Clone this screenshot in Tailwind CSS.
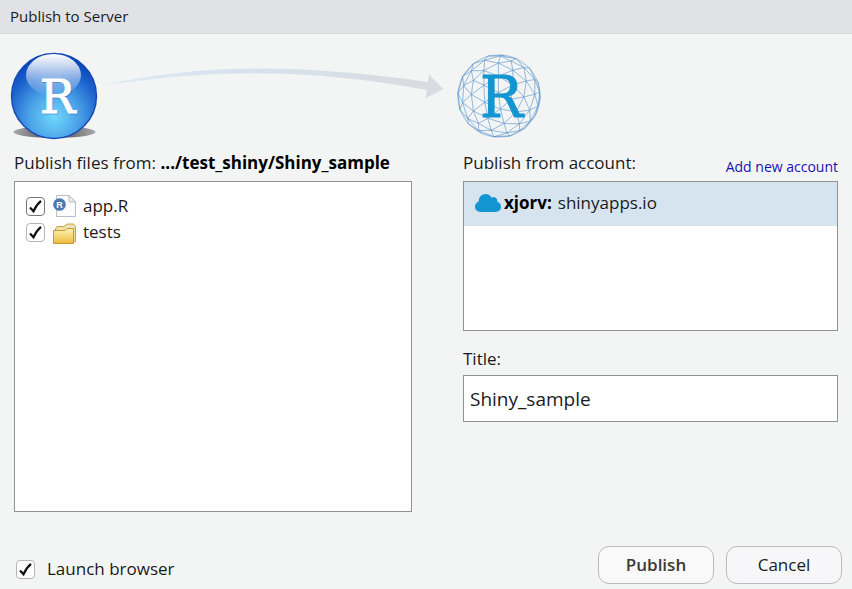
<!DOCTYPE html>
<html lang="en">
<head>
<meta charset="utf-8">
<meta name="viewport" content="width=device-width, initial-scale=1">
<title>Publish to Server</title>
<script src="https://cdn.jsdelivr.net/npm/@tailwindcss/browser@4"></script>
</head>
<body class="flex min-h-screen flex-col bg-[#f3f5f4] font-['Open_Sans','Noto_Sans',sans-serif] text-[17px] leading-6 text-[#1a1a1a]">
<header class="border-b border-[#d8d9dd] bg-[#e1e2e6] px-[10px] pt-1 pb-[5px]">
  <h1 class="text-[15px] leading-6">Publish to Server</h1>
</header>

<main class="flex flex-1 flex-col px-[14px] pt-4">
  <div class="grid grid-cols-[398fr_375fr] gap-x-[51px]" aria-hidden="true">
    <div class="-mr-8 -ml-1 flex">
      <svg class="h-[92px] w-[88px] shrink-0" viewBox="10 50 88 92">
        <defs>
          <radialGradient id="ball" gradientUnits="userSpaceOnUse" cx="54" cy="117" r="62">
            <stop offset="0" stop-color="#70d8fa"/><stop offset=".4" stop-color="#4ba2e8"/><stop offset=".75" stop-color="#1c62cd"/><stop offset="1" stop-color="#0640b8"/>
          </radialGradient>
          <linearGradient id="gloss" x1="0" y1="0" x2="0" y2="1">
            <stop offset="0" stop-color="#fff"/><stop offset=".3" stop-color="#fff" stop-opacity=".75"/><stop offset="1" stop-color="#fff" stop-opacity="0"/>
          </linearGradient>
          <linearGradient id="floor"><stop offset="0" stop-color="#a8a9aa"/><stop offset=".3" stop-color="#6e6e70"/><stop offset=".7" stop-color="#6e6e70"/><stop offset="1" stop-color="#a8a9aa"/></linearGradient>
        </defs>
        <ellipse cx="54.500" cy="132" rx="41" ry="6" fill="url(#floor)"/>
        <circle cx="54" cy="96" r="42.500" fill="url(#ball)" stroke="#1548b4" stroke-width="1.400"/>
        <ellipse cx="53.500" cy="75" rx="27.500" ry="21" fill="url(#gloss)"/>
        <text x="41" y="113.500" font-family="DejaVu Serif, serif" font-size="47" fill="#17479c" stroke="#17479c" opacity=".3">R</text>
        <text x="40" y="112.500" font-family="DejaVu Serif, serif" font-size="47" fill="#fff" stroke="#fff">R</text>
      </svg>
      <svg class="h-[92px] min-w-0 flex-1" viewBox="98 50 346 92" preserveAspectRatio="none">
        <defs><linearGradient id="sweep"><stop offset="0" stop-color="#e1ebf2"/><stop offset=".35" stop-color="#d7e3ef"/><stop offset="1" stop-color="#d9dbdf"/></linearGradient></defs>
        <path d="M100 86C200 63 300 64 428 82L429 74.500 443.500 89 425 98.500 427 90C310 69 220 68 100 86Z" fill="url(#sweep)"/>
      </svg>
    </div>
    <div>
      <svg class="-ml-[7px] h-[92px] w-[86px]" viewBox="456 50 86 92">
        <circle cx="499" cy="96" r="41.300" fill="none" stroke="#5b93cb" stroke-opacity=".5" stroke-width=".7"/>
        <path id="globe" fill="none" stroke="#5b93cb" stroke-opacity=".6" stroke-width=".6" stroke-linejoin="round"/>
        <text x="480" y="117" font-family="DejaVu Serif, serif" font-size="57" fill="#1295d0" stroke="#1295d0">R</text>
      </svg>
    </div>
  </div>

  <div class="grid flex-1 grid-cols-[398fr_375fr] gap-x-[51px]">
    <section class="flex flex-col">
      <h2 class="mt-[9px] mb-[6px]">Publish files from: <strong class="text-black">.../test_shiny/Shiny_sample</strong></h2>
      <ul class="min-h-[331px] flex-1 border border-[#919393] bg-white px-[11px] pt-[11px]">
        <li>
          <label class="flex h-[26px] items-center">
            <span class="relative flex size-[19px]">
              <input type="checkbox" checked class="peer size-[19px] appearance-none rounded-[4px] border border-[#777] bg-white">
              <svg class="pointer-events-none absolute inset-0 hidden size-[19px] peer-checked:block" viewBox="0 0 19 19" fill="none" stroke="#111" stroke-width="2.200"><path d="M4 10.500 7.500 14.200Q10.500 7.500 15 3.800"/></svg>
            </span>
            <svg class="ml-2 h-6 w-6" viewBox="0 0 24 24">
              <path d="M3.500 1.500H16L22.500 8V22.500H3.500Z" fill="#fbfcfd" stroke="#b9bec6"/>
              <path d="M16 1.500V8H22.500Z" fill="#eceef1" stroke="#b9bec6" stroke-linejoin="round"/>
              <circle cx="6.500" cy="10.500" r="6.300" fill="#4c78b2"/>
              <text x="6.500" y="13.800" text-anchor="middle" font-family="Liberation Sans, sans-serif" font-weight="700" font-size="9" fill="#fff">R</text>
            </svg>
            <span class="ml-[6px]">app.R</span>
          </label>
        </li>
        <li>
          <label class="flex h-[26px] items-center">
            <span class="relative flex size-[19px]">
              <input type="checkbox" checked class="peer size-[19px] appearance-none rounded-[4px] border border-[#b5b5b5] bg-white">
              <svg class="pointer-events-none absolute inset-0 hidden size-[19px] peer-checked:block" viewBox="0 0 19 19" fill="none" stroke="#111" stroke-width="2.200"><path d="M4 10.500 7.500 14.200Q10.500 7.500 15 3.800"/></svg>
            </span>
            <svg class="ml-2 h-6 w-6" viewBox="0 0 24 24">
              <defs><linearGradient id="folder" x1="0" y1="0" x2="0" y2="1"><stop offset="0" stop-color="#fbf2b4"/><stop offset="1" stop-color="#eebb3c"/></linearGradient></defs>
              <path d="M2.500 9 4 6.500H11L14 4H20.500L22.500 6.500V21.500H3Z" fill="#f2e3a4" stroke="#c8a24a"/>
              <path d="M14 6.500H21.500V9H13Z" fill="#e6e3dc"/>
              <path d="M.5 10.500H12L14 8.500H20.500V23.500H.5Z" fill="url(#folder)" stroke="#c99a28" stroke-linejoin="round"/>
            </svg>
            <span class="ml-[6px]">tests</span>
          </label>
        </li>
      </ul>
    </section>

    <section>
      <div class="flex h-[39px] items-start justify-between pt-[9px]">
        <h2>Publish from account:</h2>
        <a href="#" class="mt-1 text-[14px] text-[#1a12b0]">Add new account</a>
      </div>
      <ul class="h-[150px] border border-[#919393] bg-white">
        <li class="flex h-[44px] items-center bg-[#d6e4f0] px-[11px] pb-[2px]">
          <svg class="h-5 w-[26px]" viewBox="0 0 26 20"><path d="M5.500 19C2.300 19 0 16.800 0 13.800 0 11.200 1.600 9.200 3.700 8.400 3.700 4 6.800 1 10.600 1 13.400 1 15.600 2.400 16.800 4.700 19.800 3.300 22.800 5.300 22.300 8.800 24.700 9.500 26 11.500 26 13.800 26 16.800 23.800 19 20.700 19Z" fill="#1295d0"/></svg>
          <strong class="ml-[3px] text-black">xjorv:</strong><span class="ml-[6px]">shinyapps.io</span>
        </li>
      </ul>
      <label for="title" class="mt-4 mb-1 block">Title:</label>
      <input id="title" type="text" value="Shiny_sample" class="block h-[47px] w-full border border-[#919393] bg-white px-[6px] text-[19px] outline-none">
    </section>
  </div>
</main>

<footer class="flex items-end justify-between pt-[34px] pr-[10px] pb-[5px] pl-4">
  <label class="flex items-center gap-3 pb-[3px]">
    <span class="relative flex size-[19px]">
      <input type="checkbox" checked class="peer size-[19px] appearance-none rounded-[4px] border border-[#b5b5b5] bg-white">
      <svg class="pointer-events-none absolute inset-0 hidden size-[19px] peer-checked:block" viewBox="0 0 19 19" fill="none" stroke="#111" stroke-width="2.200"><path d="M4 10.500 7.500 14.200Q10.500 7.500 15 3.800"/></svg>
    </span>
    <span>Launch browser</span>
  </label>
  <div class="flex gap-3">
    <button type="button" class="h-[38px] w-[116px] rounded-[11px] border border-[#bbb] bg-[#f9f9f9] font-semibold text-[#3a3a3a]">Publish</button>
    <button type="button" class="h-[38px] w-[116px] rounded-[11px] border border-[#bbb] bg-[#f7f7f9]">Cancel</button>
  </div>
</footer>

<script>
  // Wireframe globe: subdivided icosahedron, near side only.
  const g = (1 + Math.sqrt(5)) / 2, N = 3, R = 41.5, CX = 499, CY = 96;
  const V = [[-1,g,0],[1,g,0],[-1,-g,0],[1,-g,0],[0,-1,g],[0,1,g],[0,-1,-g],[0,1,-g],[g,0,-1],[g,0,1],[-g,0,-1],[-g,0,1]];
  const F = [[0,11,5],[0,5,1],[0,1,7],[0,7,10],[0,10,11],[1,5,9],[5,11,4],[11,10,2],[10,7,6],[7,1,8],[3,9,4],[3,4,2],[3,2,6],[3,6,8],[3,8,9],[4,9,5],[2,4,11],[6,2,10],[8,6,7],[9,8,1]];
  const a = 0.35, b = 0.5;
  const place = (p) => {
    const l = Math.hypot(...p);
    let [x, y, z] = p.map((c) => c / l);
    [x, z] = [x * Math.cos(a) + z * Math.sin(a), z * Math.cos(a) - x * Math.sin(a)];
    [y, z] = [y * Math.cos(b) - z * Math.sin(b), y * Math.sin(b) + z * Math.cos(b)];
    return [CX + R * x, CY + R * y, z];
  };
  let d = "";
  for (const f of F) {
    const [A, B, C] = f.map((i) => V[i]);
    const at = (i, j) => place([0, 1, 2].map((k) => A[k] * (N - i - j) + B[k] * i + C[k] * j));
    const add = (...t) => {
      if (t[0][2] + t[1][2] + t[2][2] < -0.1) return;
      d += "M" + t.map((p) => p[0].toFixed(1) + " " + p[1].toFixed(1)).join("L") + "Z";
    };
    for (let i = 0; i < N; i++) for (let j = 0; i + j < N; j++) {
      add(at(i, j), at(i + 1, j), at(i, j + 1));
      if (i + j < N - 1) add(at(i + 1, j), at(i + 1, j + 1), at(i, j + 1));
    }
  }
  document.getElementById("globe").setAttribute("d", d);
</script>
</body>
</html>
